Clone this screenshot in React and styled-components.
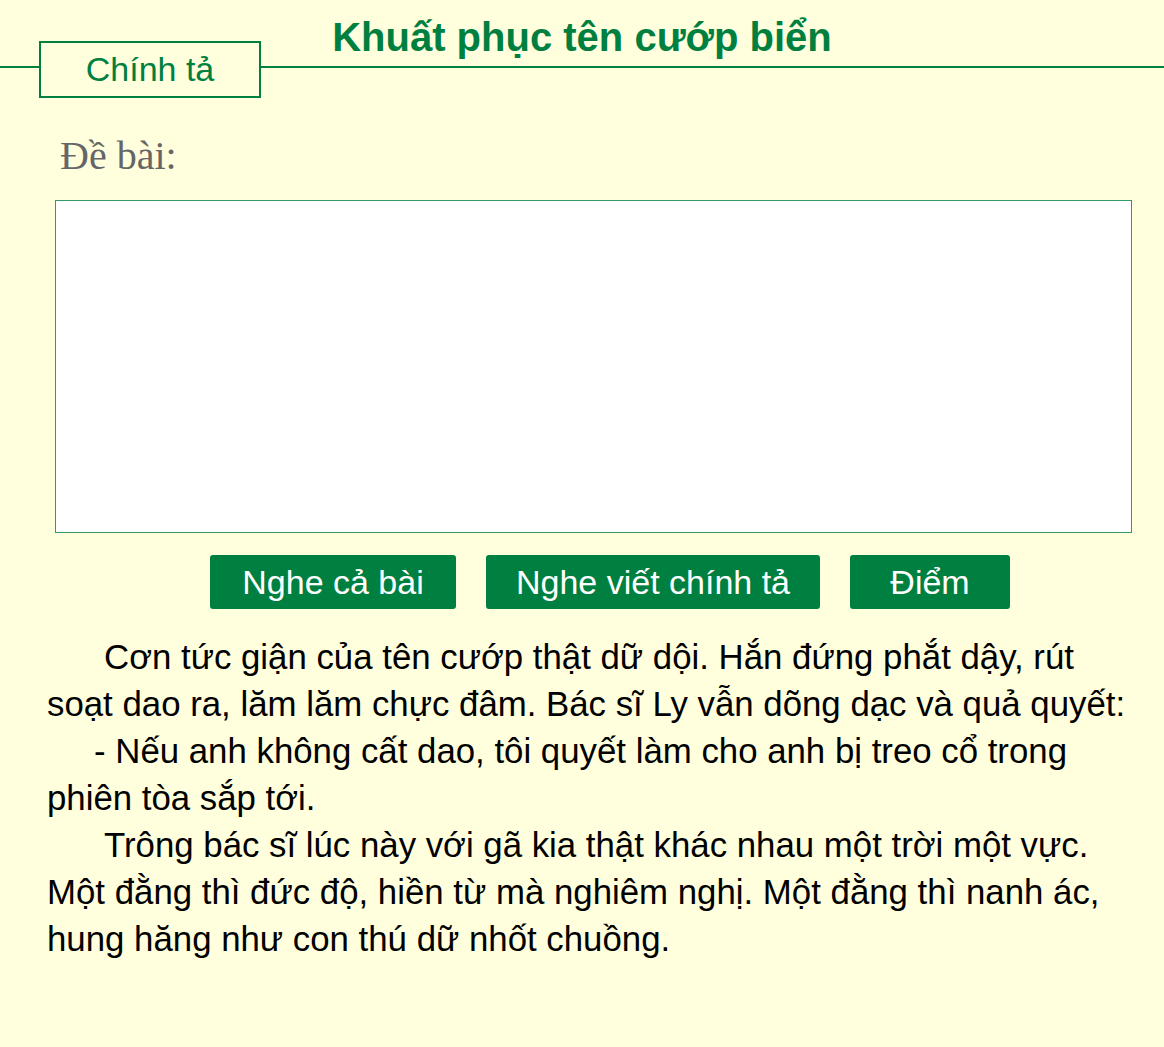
import React from 'react';
import styled, { createGlobalStyle } from 'styled-components';

const GREEN = '#008040';

const GlobalStyle = createGlobalStyle`
  html, body {
    margin: 0;
    padding: 0;
    background: #ffffdd;
  }
  body {
    font-family: "Liberation Sans", Arial, sans-serif;
  }
`;

const Page = styled.div`
  width: 1164px;
  min-height: 1047px;
  background: #ffffdd;
`;

const Header = styled.header`
  display: flex;
  flex-direction: column;
`;

const Title = styled.h1`
  margin: 0;
  padding: 18px 0 9px;
  height: 39px;
  line-height: 39px;
  text-align: center;
  font-size: 40px;
  font-weight: bold;
  color: ${GREEN};
  border-bottom: 2px solid ${GREEN};
`;

const Tab = styled.div`
  align-self: flex-start;
  margin: -27px 0 0 39px;
  width: 218px;
  height: 53px;
  border: 2px solid ${GREEN};
  background: #ffffdd;
  display: flex;
  align-items: center;
  justify-content: center;
  font-size: 34px;
  color: ${GREEN};
`;

const Label = styled.div`
  margin: 36px 0 0 60px;
  font-family: "Liberation Serif", "Times New Roman", serif;
  font-size: 40px;
  line-height: 44px;
  color: #666666;
`;

const Answer = styled.div`
  margin: 22px 0 0 55px;
  width: 1075px;
  height: 331px;
  background: #ffffff;
  border: 1px solid #339966;
`;

const Buttons = styled.div`
  display: flex;
  gap: 30px;
  margin: 22px 0 0 210px;
`;

const Button = styled.button`
  width: ${p => p.$w}px;
  height: 54px;
  border: none;
  border-radius: 3px;
  background: ${GREEN};
  color: #ffffff;
  font-family: "Liberation Sans", Arial, sans-serif;
  font-size: 34px;
  padding: 0;
  cursor: pointer;
`;

const Passage = styled.div`
  margin: 24px 0 0 47px;
  font-size: 34.8px;
  line-height: 47px;
  color: #000000;
`;

const Line = styled.div`
  padding-left: ${p => p.$indent || 0}px;
  white-space: nowrap;
`;

export default function App() {
  return (
    <Page>
      <GlobalStyle />
      <Header>
        <Title>Khuất phục tên cướp biển</Title>
        <Tab>Chính tả</Tab>
      </Header>
      <Label>Đề bài:</Label>
      <Answer />
      <Buttons>
        <Button $w={246}>Nghe cả bài</Button>
        <Button $w={334}>Nghe viết chính tả</Button>
        <Button $w={160}>Điểm</Button>
      </Buttons>
      <Passage>
        <Line $indent={57}>Cơn tức giận của tên cướp thật dữ dội. Hắn đứng phắt dậy, rút</Line>
        <Line>soạt dao ra, lăm lăm chực đâm. Bác sĩ Ly vẫn dõng dạc và quả quyết:</Line>
        <Line $indent={47}>- Nếu anh không cất dao, tôi quyết làm cho anh bị treo cổ trong</Line>
        <Line>phiên tòa sắp tới.</Line>
        <Line $indent={57}>Trông bác sĩ lúc này với gã kia thật khác nhau một trời một vực.</Line>
        <Line>Một đằng thì đức độ, hiền từ mà nghiêm nghị. Một đằng thì nanh ác,</Line>
        <Line>hung hăng như con thú dữ nhốt chuồng.</Line>
      </Passage>
    </Page>
  );
}
